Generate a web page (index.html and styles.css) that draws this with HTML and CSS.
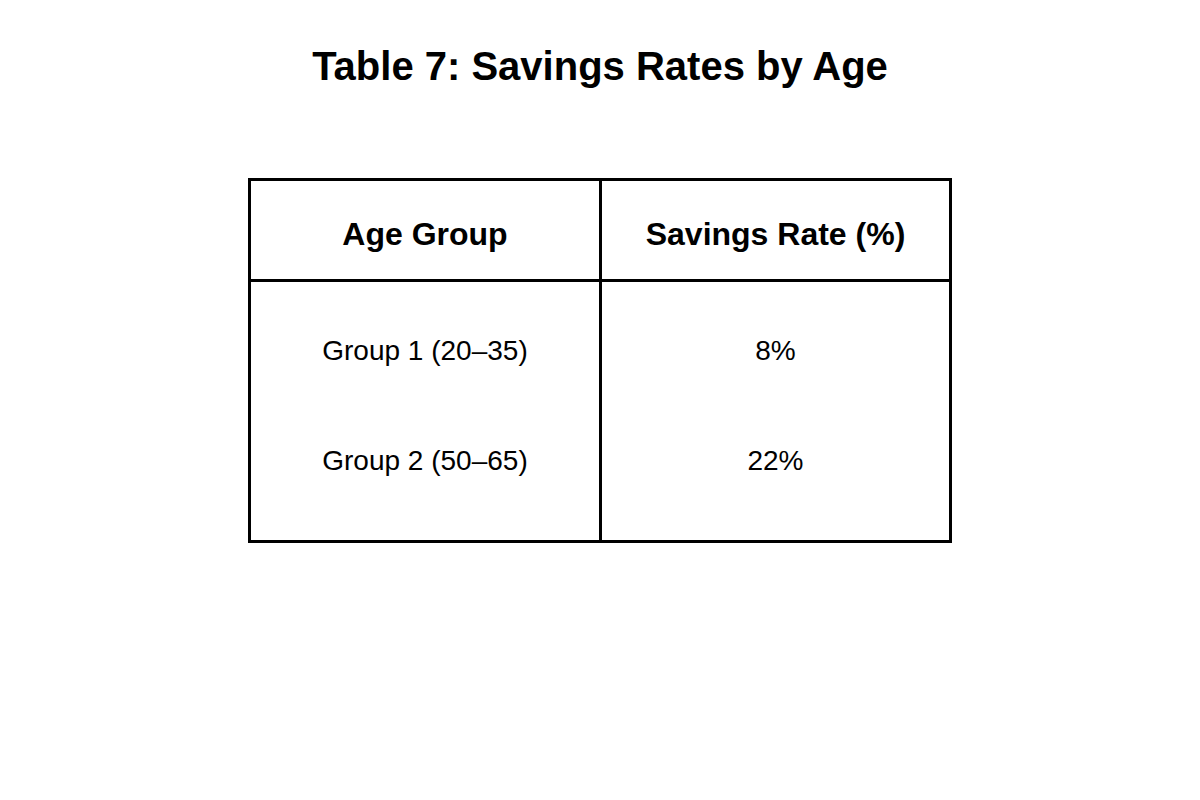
FILE: index.html
```html
<!DOCTYPE html>
<html>
<head>
<meta charset="utf-8">
<link rel="stylesheet" href="styles.css">
</head>
<body>
<div class="page">
  <h1 class="title">Table 7: Savings Rates by Age</h1>
  <div class="table">
    <div class="head">
      <div class="cell hcell">Age Group</div>
      <div class="cell hcell">Savings Rate (%)</div>
    </div>
    <div class="body">
      <div class="col">
        <div class="bcell">Group 1 (20–35)</div>
        <div class="bcell">Group 2 (50–65)</div>
      </div>
      <div class="col">
        <div class="bcell">8%</div>
        <div class="bcell">22%</div>
      </div>
    </div>
  </div>
</div>
</body>
</html>
```
FILE: styles.css
```css
html, body {
  margin: 0;
  padding: 0;
  background: #fff;
}
body {
  font-family: "Liberation Sans", Arial, sans-serif;
  color: #000;
}
.page {
  width: 1200px;
  height: 800px;
  display: flex;
  flex-direction: column;
  align-items: center;
}
.title {
  margin: 42px 0 0 0;
  font-size: 40px;
  line-height: 48px;
  font-weight: bold;
}
.table {
  margin-top: 88px;
  width: 698px;
  border: 3px solid #000;
  display: flex;
  flex-direction: column;
}
.head {
  display: grid;
  grid-template-columns: 348px 1fr;
  height: 98px;
  border-bottom: 3px solid #000;
}
.hcell {
  display: flex;
  align-items: center;
  justify-content: center;
  padding-top: 8px;
  font-weight: bold;
  font-size: 32px;
}
.hcell + .hcell {
  border-left: 3px solid #000;
}
.body {
  display: grid;
  grid-template-columns: 348px 1fr;
  height: 258px;
}
.col {
  display: flex;
  flex-direction: column;
  padding-top: 14px;
}
.col + .col {
  border-left: 3px solid #000;
}
.bcell {
  height: 110px;
  display: flex;
  align-items: center;
  justify-content: center;
  font-size: 28px;
}
```
